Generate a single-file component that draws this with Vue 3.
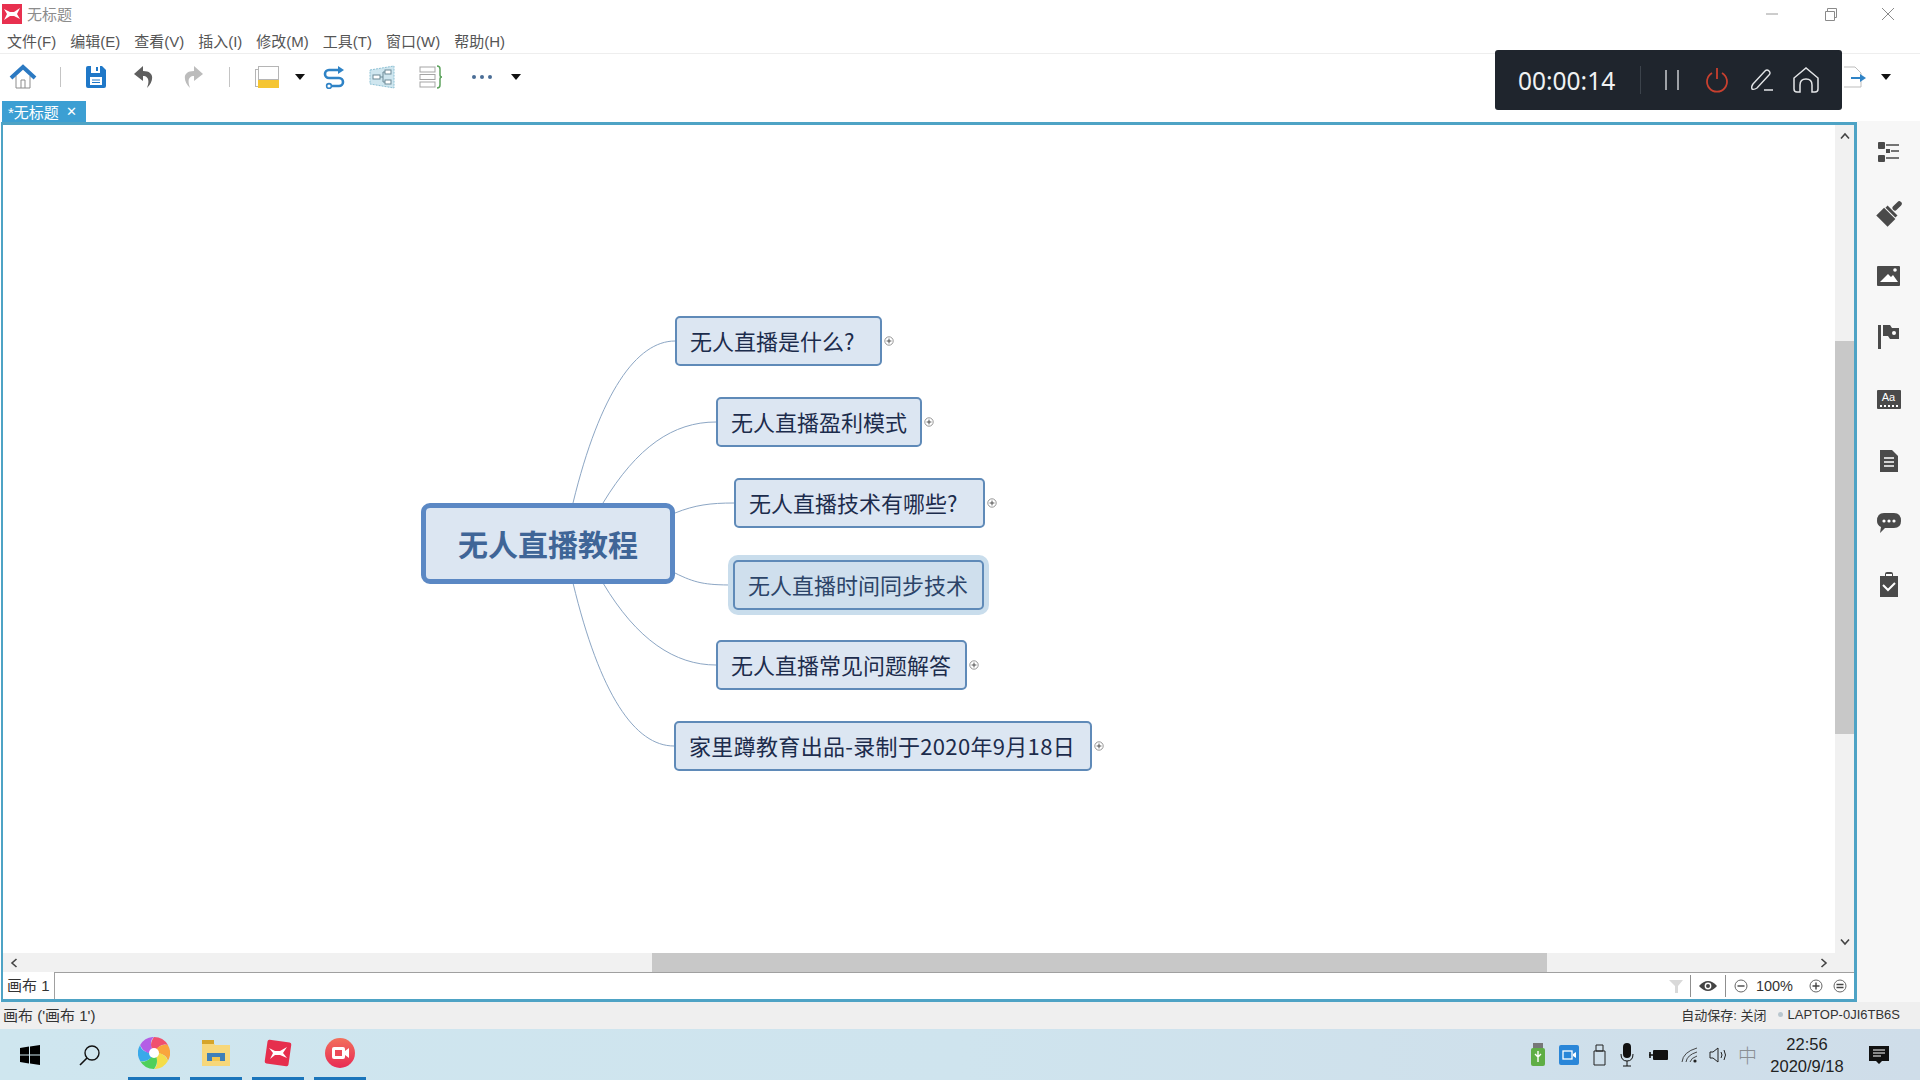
<template>
  <div class="app">
    <header class="titlebar">
      <svg class="logo" width="20" height="20" viewBox="0 0 20 20">
        <rect width="20" height="20" fill="#e8304f" />
        <path d="M2 5 L8 8 L12 8 L18 4 L15 10 L18 15 L12 12 L8 12 L2 16 L5 10 Z" fill="#fff" />
      </svg>
      <span class="title-text">无标题</span>
      <div class="win-controls">
        <svg width="16" height="16" viewBox="0 0 16 16"><path d="M2 8 H14" stroke="#9a9a9a" fill="none" /></svg>
        <svg width="16" height="16" viewBox="0 0 16 16"><path d="M3.5 5.5 H12.5 V14.5 H3.5 Z M5.5 5 V2.5 H14.5 V11.5 H13" stroke="#8a8a8a" fill="none" /></svg>
        <svg width="16" height="16" viewBox="0 0 16 16"><path d="M2 2 L14 14 M14 2 L2 14" stroke="#8a8a8a" fill="none" /></svg>
      </div>
    </header>

    <nav class="menubar">
      <span v-for="m in menus" :key="m">{{ m }}</span>
    </nav>

    <div class="toolbar">
      <svg class="t-home" width="28" height="26" viewBox="0 0 28 26">
        <path d="M7 12 V24 H21 V12 M12 24 V16 H16 V24" fill="#fff" stroke="#8d8d8d" />
        <path d="M2 14 L14 3 L26 14" fill="none" stroke="#2b79c2" stroke-width="4" />
      </svg>
      <i class="t-sep t-sep-1"></i>
      <svg class="t-save" width="20" height="22" viewBox="0 0 20 22">
        <path d="M0 2 Q0 0 2 0 H16 L20 4 V20 Q20 22 18 22 H2 Q0 22 0 20 Z" fill="#1f78c8" />
        <rect x="5" y="0" width="9" height="7" fill="#fff" />
        <rect x="10" y="1" width="2" height="4" fill="#1f78c8" />
        <rect x="4" y="11" width="12" height="8" fill="#fff" />
        <path d="M6 14 H14 M6 16.5 H14" stroke="#1f78c8" />
      </svg>
      <svg class="t-undo" width="20" height="22" viewBox="0 0 20 22">
        <path d="M9 0 L0 8 L9 15 V10 C14 10 16 14 13 22 C20 15 21 5 9 5 Z" fill="#5f5f5f" />
      </svg>
      <svg class="t-redo" width="20" height="22" viewBox="0 0 20 22">
        <path d="M11 0 L20 8 L11 15 V10 C6 10 4 14 7 22 C0 15 -1 5 11 5 Z" fill="#bcbcbc" />
      </svg>
      <i class="t-sep t-sep-2"></i>
      <svg class="t-sheet" width="24" height="22" viewBox="0 0 24 22">
        <rect x="0.5" y="3.5" width="20" height="17" fill="#fff" stroke="#b5b5b5" />
        <rect x="3.5" y="0.5" width="20" height="13" fill="#fff" stroke="#b5b5b5" />
        <rect x="3" y="14" width="21" height="8" fill="#f5c532" />
      </svg>
      <i class="caret t-caret-1"></i>
      <svg class="t-flow" width="24" height="24" viewBox="0 0 24 24">
        <path d="M19 5 H7 A4 4 0 0 0 7 13 H17 A4 4 0 0 1 17 21 H10" fill="none" stroke="#2f83c6" stroke-width="2.6" />
        <path d="M16 1 L22 5 L16 9 Z" fill="#2f83c6" />
        <circle cx="7" cy="21" r="2.4" fill="#fff" stroke="#2f83c6" stroke-width="1.6" />
      </svg>
      <svg class="t-map" width="26" height="24" viewBox="0 0 26 24">
        <path d="M1 5 L25 1 V23 L1 19 Z" fill="#cfe6ef" stroke="#8cc0d4" stroke-dasharray="2 1" />
        <rect x="4" y="10" width="7" height="4" fill="#fff" stroke="#6d8a97" />
        <rect x="16" y="5" width="6" height="4" fill="#fff" stroke="#6d8a97" />
        <rect x="16" y="15" width="6" height="4" fill="#fff" stroke="#6d8a97" />
        <path d="M11 12 H14 V7 H16 M14 12 V17 H16" fill="none" stroke="#6d8a97" />
      </svg>
      <svg class="t-brace" width="24" height="24" viewBox="0 0 24 24">
        <rect x="1" y="2" width="15" height="5" fill="#fff" stroke="#a5a5a5" />
        <rect x="1" y="9.5" width="15" height="5" fill="#fff" stroke="#a5a5a5" />
        <rect x="1" y="17" width="15" height="5" fill="#fff" stroke="#a5a5a5" />
        <path d="M18 1 Q21 1 21 4 V10 Q21 12 23 12 Q21 12 21 14 V20 Q21 23 18 23" fill="none" stroke="#5da35d" stroke-width="1.5" />
      </svg>
      <div class="t-dots"><i></i><i></i><i></i></div>
      <i class="caret t-caret-2"></i>
      <svg class="t-export" width="24" height="24" viewBox="0 0 24 24">
        <path d="M2 2 H13 L19 8 V22 H2" fill="#fff" stroke="#bdbdbd" />
        <path d="M9 13 H21" stroke="#2f83c6" stroke-width="2" />
        <path d="M18 9 L24 13 L18 17 Z" fill="#2f83c6" />
      </svg>
      <i class="caret t-caret-3"></i>
    </div>

    <div class="tabstrip">
      <div class="tab"><span>*无标题</span><b>✕</b></div>
    </div>

    <div class="workspace">
      <section class="frame">
        <div class="canvas-row">
          <div class="canvas">
            <svg class="links" width="1832" height="829" viewBox="0 0 1832 829">
              <path v-for="(l, i) in links" :key="i" :d="l" fill="none" stroke="#8ca6c4" stroke-width="1" />
            </svg>
            <div class="topic central">无人直播教程</div>
            <div
              v-for="n in nodes"
              :key="n.text"
              :class="['topic', { selected: n.selected, wide: n.wide }]"
              :style="{ left: n.x + 'px', top: n.y + 'px', width: n.w + 'px' }"
            >
              {{ n.text }}
              <svg v-if="!n.selected" class="fold" width="10" height="10" viewBox="0 0 10 10">
                <circle cx="5" cy="5" r="4.2" fill="#fff" stroke="#8a8a8a" stroke-width="0.9" />
                <path d="M2.6 5 H7.4 M5 2.6 V7.4" stroke="#444" stroke-width="0.9" />
              </svg>
            </div>
          </div>
          <div class="vscroll">
            <svg width="12" height="8" viewBox="0 0 12 8"><path d="M2 6.5 L6 2 L10 6.5" fill="none" stroke="#444" stroke-width="1.6" /></svg>
            <div class="v-track"><div class="v-thumb"></div></div>
            <svg width="12" height="8" viewBox="0 0 12 8"><path d="M2 1.5 L6 6 L10 1.5" fill="none" stroke="#444" stroke-width="1.6" /></svg>
          </div>
        </div>
        <div class="hscroll">
          <svg width="8" height="12" viewBox="0 0 8 12"><path d="M6.5 2 L2 6 L6.5 10" fill="none" stroke="#444" stroke-width="1.6" /></svg>
          <div class="h-track"><div class="h-thumb"></div></div>
          <svg width="8" height="12" viewBox="0 0 8 12"><path d="M1.5 2 L6 6 L1.5 10" fill="none" stroke="#444" stroke-width="1.6" /></svg>
        </div>
        <div class="sheetbar">
          <div class="sheet-tab">画布 1</div>
          <div class="sheet-rest">
            <svg width="16" height="16" viewBox="0 0 16 16"><path d="M1 2 H15 L10 8 V15 H7 V8 Z" fill="#d9d9d9" /></svg>
            <i class="vline vline-first"></i>
            <svg class="eye" width="18" height="12" viewBox="0 0 18 12">
              <path d="M0 6 Q9 -4 18 6 Q9 16 0 6 Z" fill="#444" />
              <circle cx="9" cy="6" r="3.4" fill="#fff" /><circle cx="9" cy="6" r="2" fill="#444" />
            </svg>
            <i class="vline"></i>
            <svg width="14" height="14" viewBox="0 0 14 14"><circle cx="7" cy="7" r="6" fill="none" stroke="#666" /><path d="M3.5 7 H10.5" stroke="#444" stroke-width="1.4" /></svg>
            <span class="zoom-val">100%</span>
            <svg width="14" height="14" viewBox="0 0 14 14"><circle cx="7" cy="7" r="6" fill="none" stroke="#666" /><path d="M3.5 7 H10.5 M7 3.5 V10.5" stroke="#444" stroke-width="1.4" /></svg>
            <svg class="zoom-fit" width="14" height="14" viewBox="0 0 14 14"><circle cx="7" cy="7" r="6" fill="none" stroke="#666" /><path d="M3.5 5.5 H10.5 M3.5 8.5 H10.5" stroke="#444" stroke-width="1.4" /></svg>
          </div>
        </div>
      </section>

      <aside class="sidebar">
        <svg width="24" height="22" viewBox="0 0 24 22">
          <rect x="1" y="1" width="7" height="7" rx="1" fill="#4a4a4a" /><rect x="1" y="14" width="7" height="7" rx="1" fill="#4a4a4a" /><rect x="9" y="8" width="4" height="4" fill="#4a4a4a" />
          <path d="M9 4 H22 M14 10 H22 M9 17 H22" stroke="#4a4a4a" stroke-width="1.6" />
        </svg>
        <svg width="26" height="26" viewBox="0 0 26 26">
          <g transform="rotate(45 13 13)" fill="#4a4a4a">
            <rect x="10.5" y="-4" width="5" height="11" rx="2.4" />
            <rect x="6" y="8" width="14" height="3" />
            <rect x="5" y="12" width="16" height="11" />
          </g>
        </svg>
        <svg width="24" height="22" viewBox="0 0 24 22">
          <rect y="1" width="23" height="20" rx="1" fill="#4a4a4a" />
          <path d="M3 17 L11 9 L14 12 L16 10 L21 17 Z" fill="#fff" /><circle cx="18" cy="5" r="1.8" fill="#fff" />
        </svg>
        <svg width="24" height="26" viewBox="0 0 24 26">
          <rect x="1" y="1" width="3" height="24" fill="#4a4a4a" />
          <path d="M6 1 H13 L15 4 H22 V15 H13 L11 12 H6 Z" fill="#4a4a4a" /><circle cx="17" cy="9" r="2" fill="#fff" />
        </svg>
        <div class="aa-icon">Aa<em></em></div>
        <svg width="20" height="24" viewBox="0 0 20 24">
          <path d="M1 1 H13 L19 7 V23 H1 Z" fill="#4a4a4a" />
          <path d="M5 9 H15 M5 13 H15 M5 17 H15" stroke="#fff" stroke-width="1.4" />
        </svg>
        <svg width="24" height="24" viewBox="0 0 24 24">
          <path d="M7 2 H17 Q24 2 24 10 Q24 17 17 17 H8 L3 22 L4 16 Q0 14 0 10 Q0 2 7 2 Z" fill="#4a4a4a" />
          <circle cx="7" cy="10" r="1.6" fill="#fff" /><circle cx="12" cy="10" r="1.6" fill="#fff" /><circle cx="17" cy="10" r="1.6" fill="#fff" />
        </svg>
        <svg width="20" height="26" viewBox="0 0 20 26">
          <path d="M1 4 H6 V2 Q6 0 8 0 H12 Q14 0 14 2 V4 H19 V25 H1 Z" fill="#4a4a4a" />
          <rect x="7" y="2" width="6" height="2" fill="#fff" />
          <path d="M4 13 L9 18 L16 11" fill="none" stroke="#fff" stroke-width="2" />
        </svg>
      </aside>
    </div>

    <footer class="statusbar">
      <span>画布 ('画布 1')</span>
      <div class="status-right">
        <span>自动保存: 关闭</span>
        <i class="status-dot"></i>
        <span>LAPTOP-0JI6TB6S</span>
      </div>
    </footer>

    <div class="taskbar">
      <svg class="start" width="20" height="20" viewBox="0 0 20 20">
        <path d="M0 3 L9 1.6 V9.4 H0 Z M10 1.4 L20 0 V9.4 H10 Z M0 10.4 H9 V18.4 L0 17 Z M10 10.4 H20 V20 L10 18.6 Z" fill="#000" />
      </svg>
      <svg class="search" width="22" height="22" viewBox="0 0 22 22">
        <circle cx="13" cy="9" r="7" fill="none" stroke="#111" stroke-width="1.4" />
        <path d="M8 14 L1 21" stroke="#111" stroke-width="1.6" />
      </svg>
      <div class="app-slot slot-first">
        <svg width="32" height="32" viewBox="0 0 32 32">
          <path
            v-for="(c, i) in petals"
            :key="c"
            d="M16 16 C12 11 12 5 16 0 A16 16 0 0 1 29.9 8 C25 6 20 9 16 16 Z"
            :fill="c"
            :transform="`rotate(${i * 60} 16 16)`"
          />
          <circle cx="16" cy="16" r="5" fill="#fff" />
        </svg>
      </div>
      <div class="app-slot slot-folder">
        <svg width="30" height="28" viewBox="0 0 30 28">
          <path d="M1 3 H12 L14 6 H29 V27 H1 Z" fill="#f7d77a" />
          <rect x="1" y="1" width="12" height="4" fill="#d6a52a" />
          <path d="M6 22 V14 H24 V22 H19 V18 H11 V22 Z" fill="#3f7fb8" />
          <rect x="11" y="18" width="8" height="4" fill="#f2c64f" />
        </svg>
      </div>
      <div class="app-slot">
        <svg width="28" height="28" viewBox="0 0 28 28">
          <rect x="2" y="2" width="24" height="24" rx="2" fill="#e62e4d" transform="rotate(8 14 14)" />
          <path d="M5 9 L11 12 L16 12 L23 8 L19 14 L23 19 L16 16 L11 16 L6 20 L9 14 Z" fill="#fff" />
        </svg>
      </div>
      <div class="app-slot">
        <svg width="30" height="30" viewBox="0 0 30 30">
          <defs><linearGradient id="recGrad" x1="0" y1="0" x2="0" y2="1"><stop offset="0" stop-color="#f2705c" /><stop offset="1" stop-color="#e82a54" /></linearGradient></defs>
          <circle cx="15" cy="15" r="15" fill="url(#recGrad)" />
          <rect x="7" y="9" width="13" height="12" rx="2" fill="#fff" />
          <rect x="10" y="12" width="7" height="6" fill="#ec4a58" />
          <path d="M20 13 L24 10 V20 L20 17 Z" fill="#fff" />
        </svg>
      </div>

      <div class="tray">
        <svg class="tray-usb" width="16" height="24" viewBox="0 0 16 24">
          <rect x="3" y="0" width="10" height="6" fill="#777" />
          <rect x="1" y="5" width="14" height="18" rx="2" fill="#5fae45" />
          <path d="M8 8 V19 M5 11 L8 14 L11 11" stroke="#fff" fill="none" stroke-width="1.4" />
        </svg>
        <svg class="tray-video" width="20" height="20" viewBox="0 0 20 20">
          <rect width="20" height="20" rx="2" fill="#2a86d8" />
          <rect x="4" y="6" width="9" height="8" fill="none" stroke="#fff" stroke-width="1.3" />
          <path d="M14 9 L17 7 V13 L14 11 Z" fill="#fff" />
        </svg>
        <svg class="tray-drive" width="14" height="22" viewBox="0 0 14 22">
          <path d="M3 1 H10 V7 H3 Z M1 7 H12 V21 H1 Z" fill="none" stroke="#222" />
        </svg>
        <svg class="tray-mic" width="14" height="24" viewBox="0 0 14 24">
          <rect x="3" y="0" width="8" height="15" rx="4" fill="#111" />
          <path d="M1 11 Q1 18 7 18 Q13 18 13 11 M7 18 V23 M3 23 H11" fill="none" stroke="#111" />
        </svg>
        <svg class="tray-bat" width="20" height="12" viewBox="0 0 20 12">
          <rect x="4" y="1" width="15" height="10" rx="1" fill="#111" />
          <path d="M0 6 H4 M1 3 V9" stroke="#111" stroke-width="1.6" />
        </svg>
        <svg class="tray-wifi" width="18" height="16" viewBox="0 0 18 16">
          <path d="M1 15 Q2 5 16 1 M5 15 Q6 8 16 5 M9 15 Q10 11 16 9" fill="none" stroke="#333" stroke-width="0.9" />
          <circle cx="14" cy="14" r="1.6" fill="#222" />
        </svg>
        <svg class="tray-vol" width="20" height="16" viewBox="0 0 20 16">
          <path d="M1 5 H4 L9 1 V15 L4 11 H1 Z" fill="none" stroke="#222" />
          <path d="M12 5 Q14 8 12 11 M15 3 Q18 8 15 13" fill="none" stroke="#222" />
        </svg>
        <span class="tray-ime">中</span>
        <div class="clock"><span>22:56</span><span>2020/9/18</span></div>
        <svg class="tray-note" width="20" height="20" viewBox="0 0 20 20">
          <path d="M0 1 H20 V16 H13 L10 19 L7 16 H0 Z" fill="#111" />
          <path d="M4 5 H16 M4 8 H16 M4 11 H12" stroke="#fff" />
        </svg>
      </div>
    </div>

    <div class="recorder">
      <span class="rec-time">00:00:14</span>
      <i class="rec-sep"></i>
      <svg width="16" height="22" viewBox="0 0 16 22"><path d="M2 1 V21 M14 1 V21" stroke="#d4d7da" stroke-width="1.4" /></svg>
      <svg class="rec-power" width="24" height="26" viewBox="0 0 24 26">
        <path d="M7 6 A10 10 0 1 0 17 6" fill="none" stroke="#c8402f" stroke-width="1.8" />
        <path d="M12 1 V12" stroke="#c8402f" stroke-width="1.8" />
      </svg>
      <svg width="24" height="24" viewBox="0 0 24 24">
        <path d="M3 16 L15 3 Q17 1 19 3 Q21 5 19 7 L7 20 Q4 22 2 21 Q1 19 3 16 Z M14 22 H23" fill="none" stroke="#e3e5e7" stroke-width="1.4" />
      </svg>
      <svg class="rec-home" width="28" height="28" viewBox="0 0 28 28">
        <path d="M8 26 H5 Q2 26 2 23 V12 L14 2 L26 12 V23 Q26 26 23 26 H20 V19 Q20 13 14 13 Q8 13 8 19 Z" fill="none" stroke="#e3e5e7" stroke-width="1.5" />
      </svg>
    </div>
  </div>
</template>

<script setup>
const menus = ['文件(F)', '编辑(E)', '查看(V)', '插入(I)', '修改(M)', '工具(T)', '窗口(W)', '帮助(H)']

// canvas coordinates of the mind map topics
const nodes = [
  { text: '无人直播是什么?', x: 672, y: 191, w: 207 },
  { text: '无人直播盈利模式', x: 713, y: 272, w: 206 },
  { text: '无人直播技术有哪些?', x: 731, y: 353, w: 251 },
  { text: '无人直播时间同步技术', x: 730, y: 435, w: 251, selected: true },
  { text: '无人直播常见问题解答', x: 713, y: 515, w: 251 },
  { text: '家里蹲教育出品-录制于2020年9月18日', x: 671, y: 596, w: 418, wide: true }
]

const links = [
  'M570 378 C597 267 634 216 672 216',
  'M600 378 C634 322 670 297 713 297',
  'M672 388 C692 380 707 378 731 378',
  'M672 448 C692 458 702 460 730 460',
  'M600 458 C634 515 672 540 713 540',
  'M570 458 C597 570 632 621 671 621'
]

const petals = ['#f0506e', '#f9a53d', '#f4dd4a', '#4fd05a', '#39a9ea', '#b45ee6']
</script>

<style>
html, body {
  margin: 0;
  overflow: hidden;
}
</style>

<style scoped>
.app {
  position: relative;
  width: 1920px;
  height: 1080px;
  display: flex;
  flex-direction: column;
  background: #fff;
  font-family: "Liberation Sans", "Noto Sans CJK SC", sans-serif;
  color: #333;
  overflow: hidden;
}

.titlebar {
  height: 27px;
  display: flex;
  align-items: center;
  padding-left: 2px;
  flex: none;
}
.title-text {
  margin-left: 5px;
  padding-bottom: 1px;
  font-size: 15px;
  color: #8c8c8c;
}
.win-controls {
  margin-left: auto;
  margin-right: 24px;
  display: flex;
  gap: 42px;
}

.menubar {
  height: 26px;
  display: flex;
  align-items: center;
  gap: 14px;
  padding-left: 7px;
  font-size: 15px;
  color: #555;
  border-bottom: 1px solid #eee;
  flex: none;
}

.toolbar {
  height: 47px;
  display: flex;
  align-items: center;
  padding-bottom: 1px;
  box-sizing: border-box;
  flex: none;
}
.toolbar > * { flex: none; }
.t-home { margin-left: 9px; }
.t-sep {
  width: 1px;
  height: 20px;
  background: #c4c4c4;
}
.t-sep-1 { margin-left: 23px; }
.t-save { margin-left: 25px; }
.t-undo { margin-left: 28px; }
.t-redo { margin-left: 29px; }
.t-sep-2 { margin-left: 26px; }
.t-sheet { margin-left: 25px; }
.caret {
  width: 0;
  height: 0;
  border-left: 5px solid transparent;
  border-right: 5px solid transparent;
  border-top: 6px solid #111;
}
.t-caret-1 { margin-left: 16px; }
.t-flow { margin-left: 17px; }
.t-map { margin-left: 23px; }
.t-brace { margin-left: 24px; }
.t-dots {
  margin-left: 29px;
  width: 20px;
  display: flex;
  justify-content: space-between;
}
.t-dots i {
  width: 4px;
  height: 4px;
  border-radius: 50%;
  background: #4a6d96;
}
.t-caret-2 { margin-left: 19px; }
.t-export { margin-left: 1321px; }
.t-caret-3 { margin-left: 15px; }

.tabstrip {
  height: 21px;
  padding-left: 2px;
  flex: none;
  background: #fff;
}
.tab {
  width: 84px;
  height: 21px;
  display: flex;
  align-items: center;
  gap: 7px;
  padding-left: 6px;
  box-sizing: border-box;
  background: #3c9fd3;
  color: #fff;
  font-size: 15px;
}
.tab b {
  font-size: 13px;
  font-weight: 400;
}

.workspace {
  flex: 1;
  min-height: 0;
  display: flex;
}
.frame {
  width: 1856px;
  margin-left: 1px;
  box-sizing: border-box;
  border: 3px solid #4ea3c5;
  border-left-width: 2px;
  display: flex;
  flex-direction: column;
  background: #fff;
}
.canvas-row {
  flex: 1;
  min-height: 0;
  display: flex;
}
.canvas {
  position: relative;
  flex: 1;
}
.links {
  position: absolute;
  left: 0;
  top: 0;
}
.topic {
  position: absolute;
  box-sizing: border-box;
  height: 50px;
  display: flex;
  align-items: center;
  padding: 0 0 2px 13px;
  background: #dce6f2;
  border: 2px solid #5f8ab8;
  border-radius: 5px;
  font-family: "Noto Sans CJK SC", "Liberation Sans", sans-serif;
  font-size: 22px;
  color: #1c2c4c;
  white-space: nowrap;
}
.central {
  left: 418px;
  top: 378px;
  width: 254px;
  height: 81px;
  justify-content: center;
  padding: 0 0 2px;
  border: 5px solid #5b88c4;
  border-radius: 9px;
  font-size: 30px;
  font-weight: 700;
  color: #3f6597;
}
.selected {
  background: #cfdfed;
  color: #2c4468;
  box-shadow: 0 0 0 5px #c9ddec;
}
.wide { letter-spacing: 0.33px; }
.fold {
  position: absolute;
  right: -14px;
  top: 18px;
}

.vscroll {
  width: 19px;
  display: flex;
  flex-direction: column;
  align-items: center;
  background: #f1f1f1;
  padding: 7px 0 7px;
  box-sizing: border-box;
  gap: 6px;
}
.v-track {
  flex: 1;
  width: 100%;
  padding-top: 195px;
  box-sizing: border-box;
}
.v-thumb {
  height: 393px;
  background: #c8c8c8;
}

.hscroll {
  height: 19px;
  display: flex;
  align-items: center;
  background: #f1f1f1;
  padding: 0 26px 0 7px;
  gap: 6px;
  flex: none;
}
.h-track {
  flex: 1;
  height: 100%;
  padding-left: 628px;
  box-sizing: border-box;
}
.h-thumb {
  width: 895px;
  height: 100%;
  background: #c8c8c8;
}

.sheetbar {
  height: 27px;
  display: flex;
  border-top: 1px solid #a0a0a0;
  box-sizing: border-box;
  flex: none;
}
.sheet-tab {
  width: 52px;
  padding-left: 4px;
  box-sizing: border-box;
  font-size: 15px;
  line-height: 28px;
  margin-top: -1px;
  background: #fff;
  border-right: 1px solid #a0a0a0;
}
.sheet-rest {
  flex: 1;
  display: flex;
  align-items: center;
  justify-content: flex-end;
  padding-right: 7px;
}
.vline {
  width: 1px;
  height: 22px;
  background: #8f8f8f;
  margin: 0 8px;
}
.vline-first { margin-left: 6px; }
.zoom-val {
  font-size: 14.5px;
  margin: 0 16px 0 8px;
  color: #333;
}
.zoom-fit { margin-left: 10px; }

.sidebar {
  flex: 1;
  display: grid;
  grid-auto-rows: 61.85px;
  align-content: start;
  place-items: center;
  margin-top: -1px;
  background: #f7f7f7;
}
.aa-icon {
  position: relative;
  width: 24px;
  height: 19px;
  background: #4a4a4a;
  border-radius: 1px;
  color: #fff;
  font-size: 11px;
  line-height: 14px;
  text-align: center;
}
.aa-icon em {
  position: absolute;
  left: 3px;
  right: 3px;
  bottom: 2px;
  border-bottom: 2px dotted #fff;
}

.statusbar {
  height: 27px;
  display: flex;
  align-items: center;
  justify-content: space-between;
  padding: 0 20px 2px 3px;
  box-sizing: border-box;
  background: #efefef;
  font-size: 15px;
  color: #333;
  flex: none;
}
.status-right {
  display: flex;
  align-items: center;
  font-size: 13px;
}
.status-dot {
  width: 5px;
  height: 5px;
  border-radius: 50%;
  background: #b9c7cf;
  margin: 0 5px 0 11px;
}

.taskbar {
  height: 51px;
  display: flex;
  align-items: center;
  background: linear-gradient(90deg, #cfe6ef, #cfe4ee 50%, #cfdde9);
  flex: none;
}
.taskbar > * { flex: none; }
.start { margin-left: 20px; }
.search { margin-left: 39px; }
.app-slot {
  width: 52px;
  height: 100%;
  margin-left: 10px;
  display: flex;
  align-items: center;
  justify-content: center;
  box-sizing: border-box;
  border-bottom: 3px solid #1b75bb;
}
.slot-first { margin-left: 27px; }

.tray {
  margin-left: auto;
  display: flex;
  align-items: center;
  padding-right: 31px;
}
.tray > * { flex: none; }
.tray-video { margin-left: 13px; }
.tray-drive { margin-left: 14px; }
.tray-mic { margin-left: 13px; }
.tray-bat { margin-left: 15px; }
.tray-wifi { margin-left: 12px; }
.tray-vol { margin-left: 10px; }
.tray-ime {
  margin-left: 9px;
  font-family: "Noto Sans CJK SC", sans-serif;
  font-size: 19px;
  font-weight: 300;
  color: #8a8f93;
}
.clock {
  margin-left: 11px;
  width: 78px;
  display: flex;
  flex-direction: column;
  align-items: center;
  font-size: 16.5px;
  line-height: 22px;
  color: #222;
}
.tray-note { margin-left: 23px; }

.recorder {
  position: absolute;
  left: 1495px;
  top: 50px;
  width: 347px;
  height: 60px;
  display: flex;
  align-items: center;
  padding-left: 23px;
  box-sizing: border-box;
  background: #1f252d;
  border-radius: 3px;
}
.rec-time {
  width: 100px;
  font-family: "Noto Sans", sans-serif;
  font-size: 24.5px;
  color: #f0f2f3;
}
.rec-sep {
  width: 1px;
  height: 28px;
  background: #3c434b;
  margin: 0 23px 0 22px;
}
.recorder svg + svg { margin-left: 21px; }
.recorder .rec-power { margin-left: 25px; }
.recorder .rec-home { margin-left: 18px; }
</style>
